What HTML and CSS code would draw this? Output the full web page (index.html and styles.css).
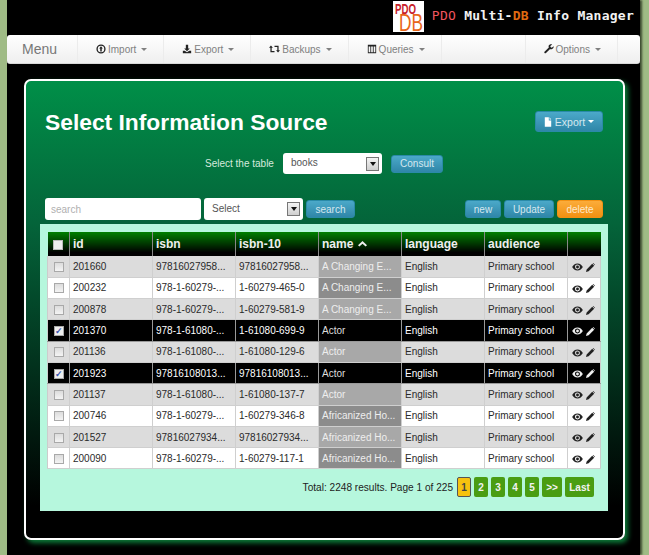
FILE: index.html
```html
<!DOCTYPE html>
<html lang="en">
<head>
<meta charset="utf-8">
<title>PDO Multi-DB Info Manager</title>
<link rel="stylesheet" href="styles.css">
</head>
<body>
<svg class="defs" width="0" height="0" aria-hidden="true">
  <symbol id="eye" viewBox="0 0 12 9"><path d="M6 .5C3.200 .5 1.100 2.400 0 4.500c1.100 2.100 3.200 4 6 4s4.900-1.900 6-4C10.900 2.400 8.800 .5 6 .5zM6 7.300A2.800 2.800 0 1 1 6 1.700a2.800 2.800 0 0 1 0 5.600z"/><circle cx="6" cy="4.500" r="1.600"/></symbol>
  <symbol id="pencil" viewBox="0 0 10 10"><path d="M0 10l.7-2.900L6.900 .9 9.100 3.100 2.900 9.300zM7.500 .3l.6-.3 1.900 1.900-.3 .6z"/></symbol>
</svg>
<div class="shell">
  <header class="brand">
    <svg class="logo" viewBox="0 0 31 31" width="31" height="31" role="img" aria-label="PDO DB logo">
      <rect width="31" height="31" fill="#fff"/>
      <text x="2" y="13" textLength="21" lengthAdjust="spacingAndGlyphs" class="logo-pdo">PDO</text>
      <text x="6" y="30" textLength="24" lengthAdjust="spacingAndGlyphs" class="logo-db">DB</text>
    </svg>
    <h2 class="brand-title"><span class="c-red">PDO</span> Multi-<span class="c-orange">DB</span> Info Manager</h2>
  </header>
  <nav class="navbar">
    <span class="nav-menu">Menu</span>
    <a class="nav-item">
      <svg class="ico" viewBox="0 0 12 12"><circle cx="6" cy="6" r="4.700" fill="none" stroke="currentColor" stroke-width="1.600"/><path d="M6 2.800L8.200 5.400H6.900V9H5.100V5.400H3.800z"/></svg>
      Import <i class="caret"></i></a>
    <a class="nav-item">
      <svg class="ico" viewBox="0 0 12 12"><path d="M4.600 1h2.800v4.500h2L6 8.700 2.600 5.500h2zM1 8h2.300L6 10l2.700-2H11v3H1z"/></svg>
      Export <i class="caret"></i></a>
    <a class="nav-item">
      <svg class="ico ico-wide" viewBox="0 0 14 10"><path d="M0 3.500L2.500 .5 5 3.500H3.400V7.500H7V9H1.800V3.500z"/><path d="M14 6.500L11.500 9.500 9 6.500h1.600V2.500H7V1h5.200v5.500z"/></svg>
      Backups <i class="caret"></i></a>
    <a class="nav-item">
      <svg class="ico" viewBox="0 0 12 12"><path fill-rule="evenodd" d="M1 1h10v10H1zM2 3v7h2V3zM5 3v7h2V3zM8 3v7h2V3z"/></svg>
      Queries <i class="caret"></i></a>
    <span class="nav-spacer"></span>
    <a class="nav-item nav-item-first">
      <svg class="ico" viewBox="0 0 12 12"><path d="M11.500 2.600L9.300 4.400 7.800 3.700 7.600 2.300 9.800 .5C8.400-.2 6.600 .3 5.900 1.600 5.400 2.500 5.400 3.500 5.800 4.300L.6 9.200C-.1 9.900 .9 11.900 2.100 11L7 6.200c1 .4 2.200 .3 3.100-.4 1.200-.8 1.800-2.100 1.400-3.200z"/></svg>
      Options <i class="caret"></i></a>
    <span class="nav-end"></span>
  </nav>
  <main class="panel">
    <div class="panel-head">
      <h1 class="panel-title">Select Information Source</h1>
      <a class="btn btn-export">
        <svg class="ico ico-file" viewBox="0 0 10 12"><path d="M1 0h5v4h3v8H1zM7 0l2 3H7z"/></svg>
        Export <i class="caret caret-light"></i></a>
    </div>
    <div class="table-picker">
      <span class="picker-label">Select the table</span>
      <div class="select select-picker">books<span class="select-arrow"></span></div>
      <a class="btn btn-consult">Consult</a>
    </div>
    <div class="toolbar">
      <input class="search-input" type="text" placeholder="search">
      <div class="select select-field">Select<span class="select-arrow"></span></div>
      <a class="btn btn-search">search</a>
      <span class="toolbar-gap"></span>
      <a class="btn btn-new">new</a>
      <a class="btn btn-update">Update</a>
      <a class="btn btn-delete">delete</a>
    </div>
    <section class="results">
      <table class="grid">
        <colgroup><col class="col-check"><col class="col-data"><col class="col-data"><col class="col-data"><col class="col-data"><col class="col-data"><col class="col-data"><col></colgroup>
        <thead>
          <tr><th class="cell-check"><span class="cb cb-head"></span></th><th>id</th><th>isbn</th><th>isbn-10</th><th>name <svg class="sort" viewBox="0 0 9 6"><path d="M4.500 0L9 4.200 7.600 5.600 4.500 2.700 1.400 5.600 0 4.200z"/></svg></th><th>language</th><th>audience</th><th></th></tr>
        </thead>
        <tbody>
          <tr class="odd"><td class="cell-check"><span class="cb"></span></td><td>201660</td><td>97816027958...</td><td>97816027958...</td><td class="name">A Changing E...</td><td>English</td><td>Primary school</td><td class="acts"><svg class="a-eye"><use href="#eye"/></svg><svg class="a-pen"><use href="#pencil"/></svg></td></tr>
          <tr class="even"><td class="cell-check"><span class="cb"></span></td><td>200232</td><td>978-1-60279-...</td><td>1-60279-465-0</td><td class="name">A Changing E...</td><td>English</td><td>Primary school</td><td class="acts"><svg class="a-eye"><use href="#eye"/></svg><svg class="a-pen"><use href="#pencil"/></svg></td></tr>
          <tr class="odd"><td class="cell-check"><span class="cb"></span></td><td>200878</td><td>978-1-60279-...</td><td>1-60279-581-9</td><td class="name">A Changing E...</td><td>English</td><td>Primary school</td><td class="acts"><svg class="a-eye"><use href="#eye"/></svg><svg class="a-pen"><use href="#pencil"/></svg></td></tr>
          <tr class="sel"><td class="cell-check"><span class="cb cb-on">✓</span></td><td>201370</td><td>978-1-61080-...</td><td>1-61080-699-9</td><td class="name">Actor</td><td>English</td><td>Primary school</td><td class="acts"><svg class="a-eye"><use href="#eye"/></svg><svg class="a-pen"><use href="#pencil"/></svg></td></tr>
          <tr class="odd"><td class="cell-check"><span class="cb"></span></td><td>201136</td><td>978-1-61080-...</td><td>1-61080-129-6</td><td class="name">Actor</td><td>English</td><td>Primary school</td><td class="acts"><svg class="a-eye"><use href="#eye"/></svg><svg class="a-pen"><use href="#pencil"/></svg></td></tr>
          <tr class="sel"><td class="cell-check"><span class="cb cb-on">✓</span></td><td>201923</td><td>97816108013...</td><td>97816108013...</td><td class="name">Actor</td><td>English</td><td>Primary school</td><td class="acts"><svg class="a-eye"><use href="#eye"/></svg><svg class="a-pen"><use href="#pencil"/></svg></td></tr>
          <tr class="odd"><td class="cell-check"><span class="cb"></span></td><td>201137</td><td>978-1-61080-...</td><td>1-61080-137-7</td><td class="name">Actor</td><td>English</td><td>Primary school</td><td class="acts"><svg class="a-eye"><use href="#eye"/></svg><svg class="a-pen"><use href="#pencil"/></svg></td></tr>
          <tr class="even"><td class="cell-check"><span class="cb"></span></td><td>200746</td><td>978-1-60279-...</td><td>1-60279-346-8</td><td class="name">Africanized Ho...</td><td>English</td><td>Primary school</td><td class="acts"><svg class="a-eye"><use href="#eye"/></svg><svg class="a-pen"><use href="#pencil"/></svg></td></tr>
          <tr class="odd"><td class="cell-check"><span class="cb"></span></td><td>201527</td><td>97816027934...</td><td>97816027934...</td><td class="name">Africanized Ho...</td><td>English</td><td>Primary school</td><td class="acts"><svg class="a-eye"><use href="#eye"/></svg><svg class="a-pen"><use href="#pencil"/></svg></td></tr>
          <tr class="even"><td class="cell-check"><span class="cb"></span></td><td>200090</td><td>978-1-60279-...</td><td>1-60279-117-1</td><td class="name">Africanized Ho...</td><td>English</td><td>Primary school</td><td class="acts"><svg class="a-eye"><use href="#eye"/></svg><svg class="a-pen"><use href="#pencil"/></svg></td></tr>
        </tbody>
      </table>
      <div class="pager">
        <span class="pager-total">Total: 2248 results. Page 1 of 225</span>
        <a class="pg pg-on">1</a><a class="pg">2</a><a class="pg">3</a><a class="pg">4</a><a class="pg">5</a><a class="pg pg-next">&gt;&gt;</a><a class="pg pg-last">Last</a>
      </div>
    </section>
  </main>
</div>
</body>
</html>
```
FILE: styles.css
```css
* { box-sizing: border-box; }
html, body { margin: 0; padding: 0; height: 555px; overflow: hidden; }
body { background: #9fbb85; font-family: "Liberation Sans", Arial, sans-serif; }
.defs { position: absolute; }
.shell { margin: 0 9px 0 7px; height: 555px; background: #000; box-shadow: 2px 0 2px #3c4a30; display: flex; flex-direction: column; }

/* brand */
.brand { height: 35px; display: flex; justify-content: flex-end; align-items: flex-start; padding: 1px 6px 0 0; }
.logo { display: block; flex: none; overflow: visible; }
.logo-pdo { font: bold 15px "Liberation Sans", sans-serif; fill: #c8202a; }
.logo-db { font: 24px "Liberation Sans", sans-serif; fill: #e8661a; }
.brand-title { margin: 7px 0 0 8px; font: bold 13px/16px "DejaVu Sans Mono", monospace; letter-spacing: .26px; color: #f2f2f2; white-space: nowrap; }
.c-red { color: #f0555f; font-weight: normal; }
.c-orange { color: #e06a10; }

/* navbar */
.navbar { flex: none; height: 29px; display: flex; align-items: stretch; background: linear-gradient(#fff, #efefef); border-radius: 3px; border-bottom: 1px solid #d8d8d8; color: #808080; font-size: 10px; }
.nav-menu { width: 71px; padding-left: 15px; font-size: 14px; line-height: 29px; color: #777; border-right: 1px solid #ececec; }
.nav-item { display: flex; align-items: center; gap: 2px; padding: 0 16px 0 18px; border-right: 1px solid #ececec; white-space: nowrap; }
.nav-item-first { border-left: 1px solid #ececec; }
.nav-spacer { flex: 1; }
.nav-end { width: 22px; }
.ico { width: 10px; height: 10px; fill: #222; color: #222; flex: none; }
.ico-wide { width: 11px; }
.ico-file { fill: #fff; height: 10px; width: 8px; }
.caret { display: inline-block; width: 0; height: 0; margin-left: 3px; border: 3px solid transparent; border-top-color: #808080; border-bottom-width: 0; }
.caret-light { border-top-color: #fff; margin-left: 0; }

/* panel */
.panel { margin: 15px 15px 0 17px; height: 461px; border: 2px solid #fff; border-radius: 7px; background: linear-gradient(#008f48 0, #04643a 31%, #000 93%); box-shadow: 3px 3px 5px #0c7a38; display: flex; flex-direction: column; }
.panel-head { display: flex; justify-content: space-between; align-items: flex-start; padding: 28px 20px 0 19px; height: 70px; }
.panel-title { margin: 0; font-size: 22.800px; line-height: 26px; font-weight: bold; color: #fff; }
.btn { display: inline-flex; align-items: center; justify-content: center; height: 18px; border-radius: 3px; background: linear-gradient(#4ba9c9, #2f86a8); color: #d5e8ef; font-size: 10px; border: 1px solid #2a8aa8; white-space: nowrap; }
.btn-export { width: 68px; height: 21px; gap: 3px; margin-top: 2px; font-size: 10.500px; }
.table-picker { display: flex; align-items: center; padding-left: 179px; height: 21px; margin-top: 2px; }
.picker-label { font-size: 10px; color: #d6eadd; width: 78px; }
.select { position: relative; height: 22px; background: #fff; border-radius: 3px; color: #555; font-size: 10px; line-height: 20px; padding-left: 8px; }
.select-picker { width: 99px; height: 21px; }
.select-field { width: 99px; margin-left: 3px; line-height: 21px; }
.select-arrow { position: absolute; right: 3px; top: 4px; width: 13px; height: 14px; background: linear-gradient(#f4f4f4, #cfcfcf); border: 1px solid #777; }
.select-arrow::after { content: ""; position: absolute; left: 3px; top: 4px; border: 3px solid transparent; border-top: 4px solid #111; border-bottom: 0; }
.btn-consult { width: 52px; margin-left: 9px; }
.toolbar { display: flex; align-items: center; padding: 0 20px 0 19px; margin-top: 24px; height: 22px; }
.search-input { width: 156px; height: 22px; border: 0; border-radius: 3px; background: #fff; padding: 0 6px; font: 10px "Liberation Sans", sans-serif; outline: 0; }
.search-input::placeholder { color: #b0b0b0; }
.btn-search { width: 49px; margin-left: 3px; }
.toolbar-gap { flex: 1; }
.btn-new { width: 36px; }
.btn-update { width: 50px; margin-left: 3px; }
.btn-delete { width: 46px; margin-left: 3px; background: linear-gradient(#fbac3a, #f29112); border-color: #f29112; color: #fde9c9; }

/* results */
.results { margin: 4px 15px 0 14px; height: 287px; background: #b6f7dd; padding: 8px 7px 0; }
.grid { width: 554px; table-layout: fixed; border-collapse: collapse; font-size: 10px; color: #2a2a2a; }
.col-check { width: 22px; }
.col-data { width: 83px; }
.grid th { height: 24px; padding: 0 0 0 3px; text-align: left; font-size: 12px; font-weight: bold; color: #eee; background: linear-gradient(#008000, #000 85%); border-left: 1px solid #888; }
.grid th:first-child { border-left: 0; }
.grid td { height: 21.300px; padding: 0 0 0 3px; border-left: 1px solid #cfcfcf; border-bottom: 1px solid #cfcfcf; white-space: nowrap; overflow: hidden; }
.grid td:first-child { border-left: 1px solid #ccc; }
.grid td:last-child { border-right: 1px solid #ccc; }
.grid .cell-check { padding: 0; text-align: center; }
.sort { width: 9px; height: 6px; fill: #eee; margin-left: 1px; vertical-align: 1px; }
.odd td { background: #dcdcdc; }
.even td { background: #fff; }
.odd .name { background: #a8a8a8; color: #eee; }
.even .name { background: #8c8c8c; color: #eee; }
.sel td { background: #000; color: #fff; border-left-color: #999; border-bottom-color: #999; }
.sel .name { color: #ddd; }
.grid .acts { padding-left: 4px; }
.acts svg { display: inline-block; vertical-align: middle; fill: #222; }
.a-eye { width: 11px; height: 8px; margin-right: 3px; }
.a-pen { width: 9px; height: 9px; }
.sel .acts svg { fill: #eee; }
.cb { display: inline-block; width: 10px; height: 10px; vertical-align: -2px; border: 1px solid #a9a9a9; background: linear-gradient(#dcdcdc, #f4f4f4); font-size: 9px; line-height: 8px; color: #3a55b0; text-align: center; overflow: hidden; }
.cb-head { background: #eee; border-color: #bbb; }
.cb-on { background: #eee; font-weight: bold; }

/* pager */
.pager { display: flex; align-items: center; justify-content: flex-end; gap: 3px; height: 20px; margin: 8px 7px 0 0; font-size: 10.100px; color: #222; }
.pager-total { margin-right: 1px; }
.pg { width: 14px; height: 20px; border-radius: 2px; background: #4a9d13; color: #f2f2f2; font-weight: bold; font-size: 10px; display: flex; align-items: center; justify-content: center; }
.pg-on { background: #f6c20f; color: #444; border: 1px solid #555; }
.pg-next { width: 20px; }
.pg-last { width: 29px; }
```
